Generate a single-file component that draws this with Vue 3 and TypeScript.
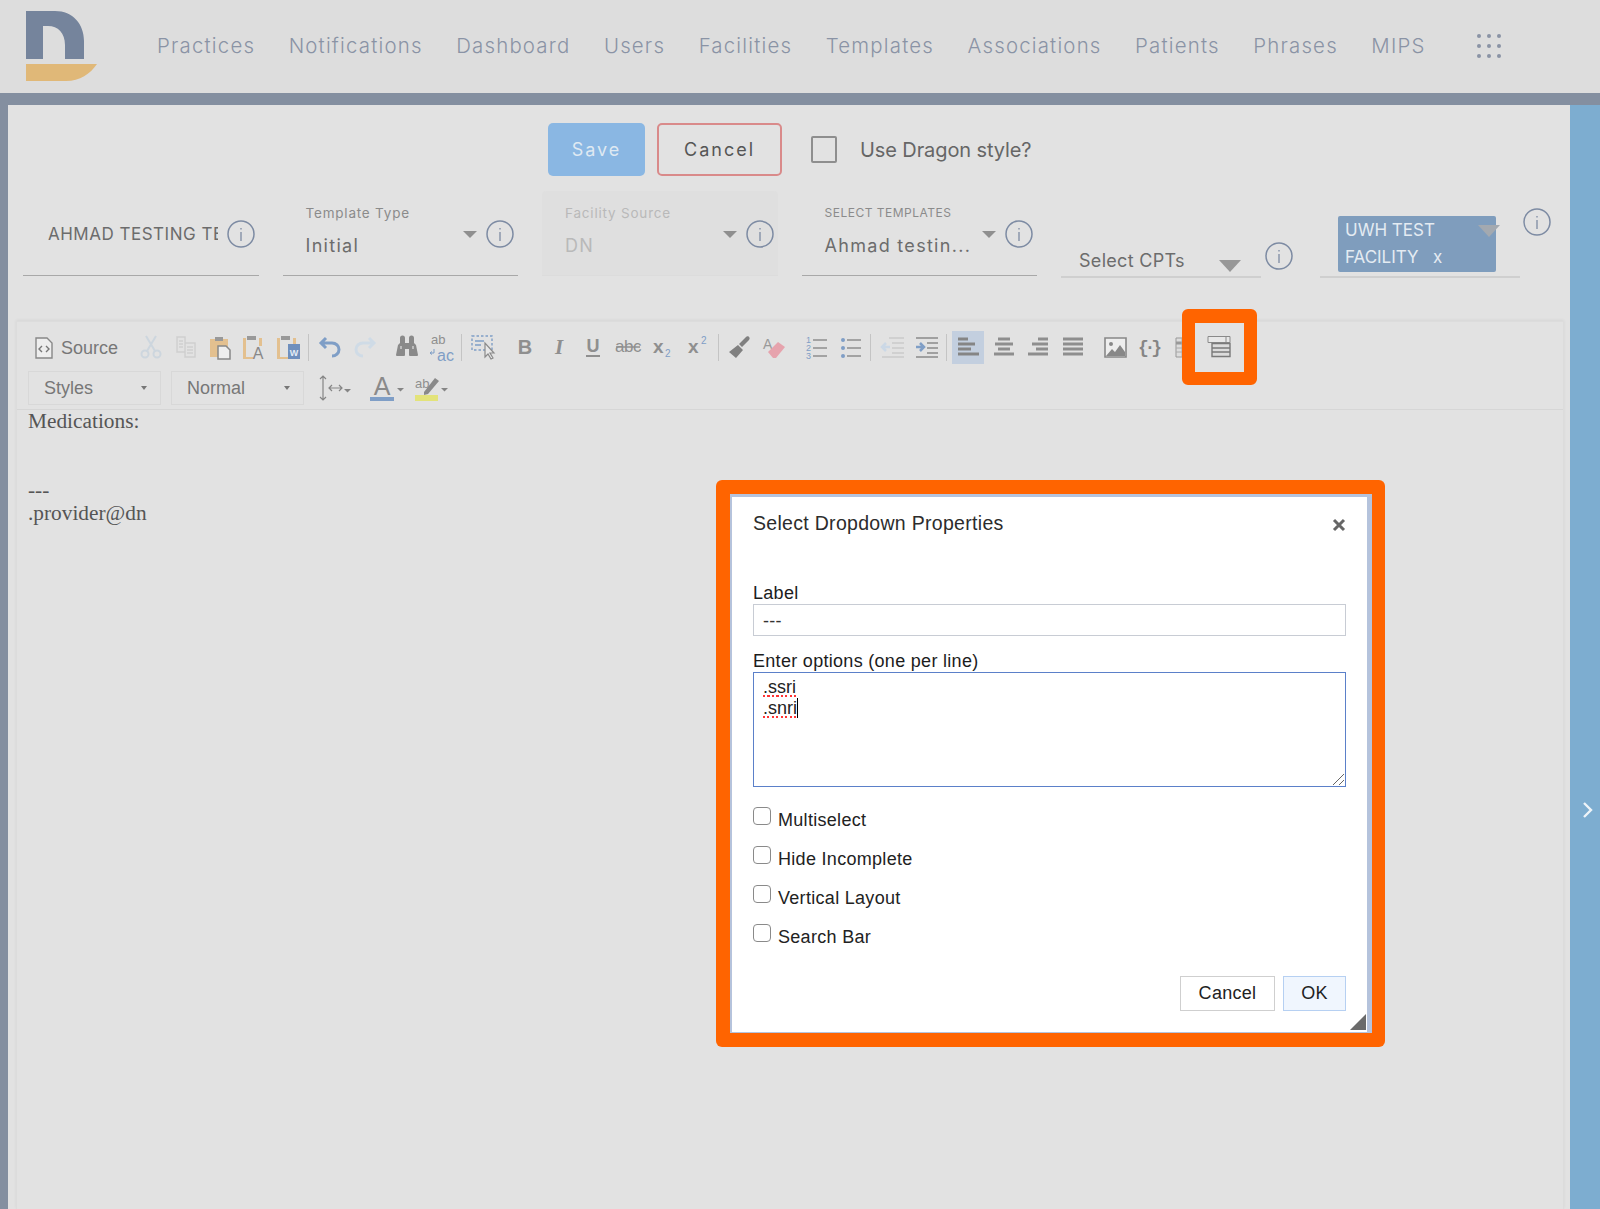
<script setup lang="ts">
const nav = ['Practices','Notifications','Dashboard','Users','Facilities','Templates','Associations','Patients','Phrases','MIPS']

const B = '#7f9ec6', O = '#e3c08f', L = '#cdd6de'
const tools: { svg?: string; sep?: boolean; cls?: string }[] = [
  { svg: `<g fill="none" stroke="${L}" stroke-width="2"><circle cx="6" cy="19" r="3.5"/><circle cx="18" cy="19" r="3.5"/><path d="M8 16 17 1M16 16 7 1"/></g>` },
  { svg: `<g fill="none" stroke="#cfcfcf" stroke-width="1.4"><path d="M3 2h8v15H3zM11 8h10v14H11z"/><path d="M5 6h4M5 9h4M5 12h4M13 12h6M13 15h6M13 18h6"/></g>` },
  { svg: `<path d="M2 4h18v18H2z" fill="${O}"/><path d="M7 2h8v4H7z" fill="#999"/><path d="M10 11h8l4 4v9H10z" fill="#eee" stroke="#888" stroke-width="1.5"/>` },
  { svg: `<path d="M1 3h3v19h8v2H1zM17 3h3v8h-3z" fill="${O}"/><path d="M5 1h9v4H5z" fill="#999"/><text x="16" y="24" font-family="Liberation Sans" font-size="16" fill="#888" text-anchor="middle">A</text>` },
  { svg: `<path d="M0 3h3v19h8v2H0zM16 3h3v6h-3z" fill="${O}"/><path d="M4 1h9v4H4z" fill="#999"/><path d="M11 9h12v15H11z" fill="#6f8fbd"/><text x="17" y="21" font-family="Liberation Sans" font-weight="700" font-size="9" fill="#e5edf5" text-anchor="middle">W</text>` },
  { sep: true },
  { svg: `<path d="M8 3 3 8l5 5M4 8h10c4 0 7 3 7 6.500s-3 6.500-7 6.500" fill="none" stroke="${B}" stroke-width="3"/>` },
  { svg: `<path d="M16 3l5 5-5 5M20 8H10c-4 0-7 3-7 6.500s3 6.500 7 6.500" fill="none" stroke="#cfdbe6" stroke-width="3"/>` },
  { cls: 'g8', svg: `<path d="M5 3a1.500 1.500 0 0 1 5 0v5h4V3a1.500 1.500 0 0 1 5 0v5l2 2 2 10a1 1 0 0 1-1 1h-7a1 1 0 0 1-1-1v-6h-4v6a1 1 0 0 1-1 1H2a1 1 0 0 1-1-1l2-10 2-2z" fill="#8a8a8a"/><path d="M5 11h2v3H5zM17 11h2v3h-2z" fill="#bdbdbd"/>` },
  { svg: `<text x="2" y="8.500" font-family="Liberation Sans" font-size="13" fill="#8f8f8f">ab</text><text x="8" y="25.500" font-family="Liberation Sans" font-size="16" fill="${B}">ac</text><path d="M5 14v4H1l2-1.500M1 18l2 1.500" fill="none" stroke="${B}" stroke-width="1"/>` },
  { sep: true },
  { svg: `<path d="M1 1h20v14H1z" fill="none" stroke="${B}" stroke-width="1.400" stroke-dasharray="2.500 2"/><path d="M4 6h9M4 10h6" stroke="${B}" stroke-width="1.400"/><path d="M14 8v14l3-3 3 5 2-1-3-5h4z" fill="#e8e8e8" stroke="#8a8a8a" stroke-width="1.200"/>` },
  { cls: 'g7', svg: `<text x="12" y="19" font-family="Liberation Sans" font-weight="700" font-size="20" fill="#8f8f8f" text-anchor="middle">B</text>` },
  { svg: `<text x="12" y="19" font-family="Liberation Serif" font-style="italic" font-weight="700" font-size="21" fill="#8f8f8f" text-anchor="middle">I</text>` },
  { svg: `<text x="12" y="17" font-family="Liberation Sans" font-weight="700" font-size="18" fill="#8f8f8f" text-anchor="middle">U</text><path d="M5 21h14" stroke="#8f8f8f" stroke-width="2"/>` },
  { svg: `<text x="12" y="17" font-family="Liberation Sans" font-size="17" fill="#8f8f8f" text-anchor="middle" letter-spacing="-0.500">abc</text><path d="M0 12h24" stroke="#8f8f8f" stroke-width="1.500"/>` },
  { cls: 'g2', svg: `<text x="1" y="18" font-family="Liberation Sans" font-weight="700" font-size="19" fill="#8f8f8f">x</text><text x="13" y="22" font-family="Liberation Sans" font-size="10" fill="${B}">2</text>` },
  { svg: `<text x="1" y="18" font-family="Liberation Sans" font-weight="700" font-size="19" fill="#8f8f8f">x</text><text x="14" y="9" font-family="Liberation Sans" font-size="10" fill="${B}">2</text>` },
  { sep: true },
  { svg: `<path d="M10 10l5 5-7 8-7-6zM11 9l7-7c2-2 5 1 3 3l-7 7z" fill="#808080"/>` },
  { svg: `<text x="1" y="14" font-family="Liberation Sans" font-size="14" fill="#9a9a9a">A</text><path d="M6 17 16 7l7 5-9 11h-3z" fill="#e6a3ad"/>` },
  { cls: 'g8', svg: `<g fill="${B}" font-family="Liberation Sans" font-size="9"><text x="1" y="8">1</text><text x="1" y="16">2</text><text x="1" y="24">3</text></g><path d="M8 5h14M8 13h14M8 21h14" stroke="#8f8f8f" stroke-width="1.500"/>` },
  { svg: `<g fill="${B}"><circle cx="4" cy="5" r="2"/><circle cx="4" cy="13" r="2"/><circle cx="4" cy="21" r="2"/></g><path d="M8 5h14M8 13h14M8 21h14" stroke="#8f8f8f" stroke-width="1.500"/>` },
  { sep: true },
  { svg: `<path d="M8 3h15M11 8h12M11 13h12M11 18h12M1 22h22" stroke="#d0d0d0" stroke-width="2"/><path d="M9 12H1m4-4-4 4 4 4" fill="none" stroke="#cbd8e6" stroke-width="2.500"/>` },
  { svg: `<path d="M1 3h22M12 8h11M12 13h11M12 18h11M1 22h22" stroke="#a0a0a0" stroke-width="2"/><path d="M1 12h8m-4-4 4 4-4 4" fill="none" stroke="${B}" stroke-width="2.500"/>` },
  { sep: true },
  { cls: 'on g1', svg: `<path d="M2 4h10M2 9h17M2 14h13M2 19h21" stroke="#858585" stroke-width="3"/>` },
  { svg: `<path d="M6 4h12M3 9h18M6 14h12M2 19h20" stroke="#8e8e8e" stroke-width="3"/>` },
  { svg: `<path d="M12 4h10M6 9h16M10 14h12M2 19h20" stroke="#8e8e8e" stroke-width="3"/>` },
  { svg: `<path d="M2 4h20M2 9h20M2 14h20M2 19h20" stroke="#8e8e8e" stroke-width="3"/>` },
  { cls: 'g8', svg: `<path d="M2 3h21v19H2z" fill="#eee" stroke="#888" stroke-width="1.600"/><circle cx="8" cy="9" r="2" fill="#888"/><path d="M3 21l6-7 3 3 5-7 5 7v4z" fill="#888"/>` },
  { cls: 'g1', svg: `<text x="12" y="18" font-family="Liberation Mono" font-weight="700" font-size="18" fill="#858585" text-anchor="middle" textLength="24" lengthAdjust="spacing">{·}</text>` },
  { svg: `<path d="M3 3h18v19H3z" fill="#ddd" stroke="#999"/><path d="M3 8h18" stroke="#999" stroke-width="3"/><path d="M9 3v19M15 3v19M3 13h18M3 17h18" stroke="#aaa"/>` },
  { svg: `<path d="M1 1.500h22v6H1z" fill="#e8e8e8" stroke="#8a8a8a" stroke-width="1"/><path d="M19 1.500v6" stroke="#8a8a8a"/><path d="M5 8.500h18v13H5z" fill="#dcdcdc" stroke="#7a7a7a" stroke-width="1.400"/><path d="M5 13h18M5 17h18" stroke="#7a7a7a" stroke-width="1.600"/>` },
]
const checks = ['Multiselect','Hide Incomplete','Vertical Layout','Search Bar']
</script>

<template>
  <div class="page">
    <header class="top">
      <svg class="logo" width="72" height="72" viewBox="26 10 72 72">
        <path d="M26 11H55C73 11 84 24 84 41V59H65V45C65 33 58 26 48 26H43V59H26Z" fill="#75849c"/>
        <path d="M26 64H97C90 74 80 81 66 81H26Z" fill="#e0b878"/>
      </svg>
      <nav class="nav"><a v-for="n in nav" :key="n">{{ n }}</a></nav>
      <svg class="grid" width="24" height="24" viewBox="0 0 24 24" fill="#8a93a5">
        <template v-for="y in [2,12,22]" :key="y"><circle v-for="x in [2,12,22]" :key="x" :cx="x" :cy="y" r="2"/></template>
      </svg>
    </header>

    <div class="main">
      <div class="content">
        <div class="actions">
          <button class="save">Save</button>
          <button class="cancel">Cancel</button>
          <span class="dragon-box"></span>
          <span class="dragon">Use Dragon style?</span>
        </div>

        <div class="fields">
          <div class="field f-name">
            <span class="name">AHMAD TESTING TEMPLATE</span>
            <svg class="info" width="28" height="28" viewBox="0 0 28 28"><circle cx="14" cy="14" r="13" fill="none" stroke="#7d8ba3" stroke-width="1.500"/><path d="M14 8v1.500M14 12v9" stroke="#7d8ba3" stroke-width="1.300"/></svg>
          </div>
          <div class="field">
            <div class="ftext"><label>Template Type</label><div class="val">Initial</div></div>
            <i class="arrow"></i>
            <svg class="info" width="28" height="28" viewBox="0 0 28 28"><circle cx="14" cy="14" r="13" fill="none" stroke="#7d8ba3" stroke-width="1.500"/><path d="M14 8v1.500M14 12v9" stroke="#7d8ba3" stroke-width="1.300"/></svg>
          </div>
          <div class="field disabled">
            <div class="ftext"><label>Facility Source</label><div class="val">DN</div></div>
            <i class="arrow"></i>
            <svg class="info" width="28" height="28" viewBox="0 0 28 28"><circle cx="14" cy="14" r="13" fill="none" stroke="#7d8ba3" stroke-width="1.500"/><path d="M14 8v1.500M14 12v9" stroke="#7d8ba3" stroke-width="1.300"/></svg>
          </div>
          <div class="field">
            <div class="ftext"><label class="up">SELECT TEMPLATES</label><div class="val">Ahmad testin...</div></div>
            <i class="arrow"></i>
            <svg class="info" width="28" height="28" viewBox="0 0 28 28"><circle cx="14" cy="14" r="13" fill="none" stroke="#7d8ba3" stroke-width="1.500"/><path d="M14 8v1.500M14 12v9" stroke="#7d8ba3" stroke-width="1.300"/></svg>
          </div>
          <div class="cpts">
            <div class="cpts-box"><span>Select CPTs</span><i class="arrow big"></i></div>
            <svg class="info" width="28" height="28" viewBox="0 0 28 28"><circle cx="14" cy="14" r="13" fill="none" stroke="#7d8ba3" stroke-width="1.500"/><path d="M14 8v1.500M14 12v9" stroke="#7d8ba3" stroke-width="1.300"/></svg>
          </div>
          <div class="fac">
            <div class="fac-box">
              <div class="chip">UWH TEST<br>FACILITY&nbsp;&nbsp;&nbsp;x</div>
              <i class="arrow big over"></i>
            </div>
            <svg class="info" width="28" height="28" viewBox="0 0 28 28"><circle cx="14" cy="14" r="13" fill="none" stroke="#7d8ba3" stroke-width="1.500"/><path d="M14 8v1.500M14 12v9" stroke="#7d8ba3" stroke-width="1.300"/></svg>
          </div>
        </div>

        <section class="editor">
          <div class="tb1">
            <div class="source">
              <svg width="18" height="22" viewBox="0 0 18 22"><path d="M1 1h11l5 5v15H1z" fill="#eee" stroke="#888" stroke-width="1.400"/><path d="M7 9l-3 3 3 3M11 9l3 3-3 3" fill="none" stroke="#777" stroke-width="1.400"/></svg>
              <span>Source</span>
            </div>
            <template v-for="(t, i) in tools" :key="i">
              <span v-if="t.sep" class="sep"></span>
              <span v-else class="btn" :class="t.cls"><svg width="24" height="24" viewBox="0 0 24 24" v-html="t.svg"></svg></span>
            </template>
          </div>
          <div class="tb2">
            <div class="combo"><span>Styles</span><i></i></div>
            <div class="combo"><span>Normal</span><i></i></div>
            <span class="t2 lh">
              <svg width="34" height="30" viewBox="0 0 34 30" fill="none" stroke="#858585" stroke-width="1.200"><path d="M5 3v24M2 6l3-3 3 3M2 24l3 3 3-3M11 15h13M14 12l-3 3 3 3M21 12l3 3-3 3"/><path d="M26 16h7l-3.500 3.500z" fill="#858585" stroke="none"/></svg>
            </span>
            <span class="t2 col">
              <svg width="34" height="30" viewBox="0 0 34 30"><text x="12" y="22" font-family="Liberation Sans" font-size="25" fill="#8a8a8a" text-anchor="middle">A</text><path d="M0 24h24v4H0z" fill="#7f9ec6"/><path d="M27 15h7l-3.500 3.500z" fill="#858585"/></svg>
            </span>
            <span class="t2 hl">
              <svg width="34" height="30" viewBox="0 0 34 30"><text x="0" y="15" font-family="Liberation Sans" font-size="13" fill="#8f8f8f">ab</text><path d="M9 19 20 5l4 3-11 13-4 1z" fill="#8a8a8a"/><path d="M0 22h23v6H0z" fill="#e3e37a"/><path d="M26 15h7l-3.500 3.500z" fill="#858585"/></svg>
            </span>
          </div>
          <div class="doc">
            <p>Medications:</p>
            <p>&nbsp;</p>
            <p>&nbsp;</p>
            <p>---</p>
            <p>.provider@dn</p>
          </div>
        </section>
      </div>
      <aside class="side">
        <svg width="14" height="20" viewBox="0 0 14 20"><path d="M3 3l7 7-7 7" fill="none" stroke="#eef4f8" stroke-width="2.400"/></svg>
      </aside>
    </div>

    <div class="mark"></div>

    <div class="dialog-frame">
      <div class="dialog">
        <h2>Select Dropdown Properties</h2>
        <svg class="close" width="14" height="14" viewBox="0 0 14 14"><path d="M2 2l10 10M12 2 2 12" stroke="#666" stroke-width="3"/></svg>
        <div class="lab l1">Label</div>
        <div class="input">---</div>
        <div class="lab l2">Enter options (one per line)</div>
        <div class="area">
          <div><u>.ssri</u></div>
          <div><u>.snri</u><b class="caret"></b></div>
          <svg class="grip" width="14" height="14" viewBox="0 0 14 14"><path d="M2 13 13 2M8 13l5-5" stroke="#666"/></svg>
        </div>
        <div class="checks">
          <div v-for="c in checks" :key="c" class="check"><span class="cb"></span><span>{{ c }}</span></div>
        </div>
        <div class="btns">
          <span class="b-cancel">Cancel</span>
          <span class="b-ok">OK</span>
        </div>
        <svg class="resize" width="16" height="16" viewBox="0 0 16 16"><path d="M16 0v16H0z" fill="#6b6b6b"/></svg>
      </div>
    </div>
  </div>
</template>

<style scoped>
.page { position: relative; width: 1600px; height: 1209px; overflow: hidden; display: flex; flex-direction: column; background: #e2e2e2; font-family: "Liberation Sans", Arial, sans-serif; }
.top { height: 93px; flex: none; background: #dddddd; display: flex; align-items: center; }
.logo { margin-left: 26px; margin-top: -1px; flex: none; }
.nav { display: flex; gap: 33.500px; margin-left: 59px; margin-top: -2px; font-family: Inter, sans-serif; font-size: 20.400px; font-weight: 300; color: #8a93a5; letter-spacing: 1.200px; white-space: nowrap; }
.grid { margin-left: 51px; margin-top: -2px; }
.main { flex: 1; min-height: 0; display: flex; border-top: 12px solid #848fa0; border-left: 8px solid #848fa0; }
.content { flex: 1; min-width: 0; display: flex; flex-direction: column; background: #e2e2e2; }
.side { width: 30px; flex: none; background: #7dadd0; display: flex; align-items: flex-start; justify-content: center; padding-top: 695px; box-sizing: border-box; }
.side svg { margin-left: 6px; }

.actions { display: flex; align-items: center; height: 53px; margin-top: 18px; padding-left: 540px; font-family: Inter, sans-serif; }
.save { width: 97px; height: 53px; border: 0; border-radius: 5px; background: #8ab7e3; color: #dfe9f2; font: 18px Inter, sans-serif; letter-spacing: 2px; }
.cancel { width: 125px; height: 53px; margin-left: 12px; border: 2px solid #d98a8a; border-radius: 5px; background: #e2e2e2; color: #555; font: 18px Inter, sans-serif; letter-spacing: 2px; }
.dragon-box { width: 26px; height: 27px; margin-left: 29px; border: 2px solid #8e8e8e; border-radius: 2px; box-sizing: border-box; }
.dragon { margin-left: 23px; font-size: 20px; letter-spacing: -0.100px; color: #666; white-space: nowrap; }

.fields { display: flex; margin-top: 15px; padding-left: 15px; align-items: flex-start; }
.field { width: 235.500px; height: 85px; box-sizing: border-box; margin-right: 24px; border-bottom: 1px solid #a8a8a8; display: flex; padding: 0 4px 0 23px; flex: none; }
.ftext { flex: 1; min-width: 0; padding-top: 14px; }
label { display: block; font-family: Inter, sans-serif; font-size: 13.500px; line-height: 16px; color: #8b8b8b; letter-spacing: 0.800px; white-space: nowrap; }
label.up { font-size: 12px; letter-spacing: 0.500px; }
.val { margin-top: 13px; font-family: Inter, sans-serif; font-size: 18px; line-height: 24px; color: #6c6c6c; letter-spacing: 1.300px; white-space: nowrap; }
.arrow { flex: none; align-self: flex-start; margin-top: 40px; margin-right: 9px; width: 0; height: 0; border-left: 7.500px solid transparent; border-right: 7.500px solid transparent; border-top: 7.500px solid #8f8f8f; }
.info { flex: none; align-self: flex-start; margin-top: 29px; }
.disabled { background: #dfdfdf; border-bottom-color: #dcdcdc; border-radius: 4px 4px 0 0; }
.disabled label, .disabled .val { color: #b9b9b9; }
.f-name { padding-left: 25px; }
.name { width: 170px; flex: none; margin: 31px 9px 0 0; height: 24px; overflow: hidden; font-family: Inter, sans-serif; font-size: 17px; line-height: 24px; color: #6c6c6c; letter-spacing: 0.500px; white-space: nowrap; }

.cpts { display: flex; width: 259px; flex: none; }
.cpts-box { position: relative; width: 200px; height: 87px; box-sizing: border-box; border-bottom: 2px solid #cfcfcf; padding: 58px 0 0 18px; font-family: Inter, sans-serif; font-size: 18px; line-height: 24px; letter-spacing: 0.300px; color: #6c6c6c; display: flex; justify-content: space-between; margin-right: 4px; }
.arrow.big { border-left-width: 11px; border-right-width: 11px; border-top-width: 12px; border-top-color: #979797; margin: 11px 20px 0 0; }
.cpts .info { margin-top: 51px; }
.fac { display: flex; flex: none; }
.fac-box { position: relative; width: 200px; height: 87px; box-sizing: border-box; border-bottom: 2px solid #cfcfcf; padding: 25px 0 0 18px; margin-right: 3px; }
.chip { width: 158px; height: 56px; box-sizing: border-box; padding: 1px 0 0 7px; background: #7f9dbd; border-radius: 2px; color: #e4ebf2; font-family: Inter, sans-serif; font-size: 17px; line-height: 27px; white-space: nowrap; }
.arrow.big.over { position: absolute; left: 158px; top: 34px; margin: 0; border-top-color: #a3a9b0; }
.fac .info { margin-top: 17px; }

.editor { flex: 1; min-height: 0; margin: 43px 6px 0 8px; border: 1px solid #dcdcdc; border-bottom: 0; box-shadow: 0 -1px 3px rgba(0,0,0,.06); background: #e2e2e2; }
.tb1 { display: flex; align-items: center; height: 33px; margin-top: 9px; padding-left: 18px; }
.source { display: flex; align-items: center; width: 99px; font-size: 18px; color: #777; gap: 8px; flex: none; padding-top: 1px; box-sizing: border-box; }
.btn { width: 34.400px; height: 33px; flex: none; display: flex; align-items: center; justify-content: center; }
.btn svg { margin-top: -1px; overflow: visible; }
.btn.on { background: #c3cfdf; width: 32px; margin-right: 2.400px; }
.g8 { margin-left: 8px; }
.g7 { margin-left: 7.600px; }
.g2 { margin-left: 2px; }
.g1 { margin-left: 1px; }
.sep { width: 1px; height: 27px; background: #c4c4c4; margin: 0 4px 0 2px; flex: none; }
.tb2 { display: flex; align-items: center; height: 34px; margin-top: 7px; padding-left: 11px; padding-bottom: 4px; box-sizing: content-box; border-bottom: 1px solid #d6d6d6; }
.combo { width: 133px; height: 34px; box-sizing: border-box; margin-right: 10px; border: 1px solid #d8d8d8; display: flex; align-items: center; justify-content: space-between; padding: 0 13px 0 15px; font-size: 18px; color: #777; }
.combo i { width: 0; height: 0; border-left: 3.500px solid transparent; border-right: 3.500px solid transparent; border-top: 4px solid #777; }
.t2 { display: flex; width: 34px; }
.lh { margin-left: 4px; }
.col { margin-left: 18px; }
.hl { margin-left: 11px; }
.doc { padding-left: 11px; font-family: "Liberation Serif", "Times New Roman", serif; font-size: 21.330px; line-height: 23px; color: #555; }
.doc p { margin: 0; }

.mark { position: absolute; left: 1182px; top: 309px; width: 75px; height: 76px; box-sizing: border-box; border: 13px solid #ff6400; border-top-width: 14px; border-radius: 6px; }
.dialog-frame { position: absolute; left: 716px; top: 480px; width: 669px; height: 567px; box-sizing: border-box; padding: 14px 13px 14px 14px; background: #ff6400; border-radius: 6px; }
.dialog { position: relative; height: 100%; box-sizing: border-box; background: #fff; border: solid #b5c3dc; border-width: 3px 5px 1px 2px; padding: 14px 21px 0 21px; color: #222; font-size: 18px; line-height: 20px; letter-spacing: 0.300px; }
h2 { margin: 0; font-size: 19.500px; font-weight: 400; line-height: 24px; color: #2c2c2c; }
.close { position: absolute; right: 21px; top: 21px; }
.lab { color: #1c1c1c; }
.l1 { margin-top: 48px; }
.l2 { margin-top: 15px; }
.input { margin-top: 1px; height: 32px; box-sizing: border-box; border: 1px solid #c8ccd4; padding: 0 9px; line-height: 32px; color: #333; }
.area { position: relative; margin-top: 1px; height: 115px; box-sizing: border-box; border: 1px solid #5b80c9; padding: 4px 9px; line-height: 21px; color: #222; letter-spacing: 0; }
.area u { text-decoration: none; background: repeating-linear-gradient(90deg, #f33 0 2px, transparent 2px 4.500px) left bottom / 100% 2px no-repeat; }
.caret { display: inline-block; width: 1px; height: 20px; background: #000; vertical-align: -4px; }
.grip { position: absolute; right: 0; bottom: 0; }
.checks { margin-top: 23px; display: flex; flex-direction: column; gap: 19px; }
.check { display: flex; gap: 7px; height: 20px; }
.cb { width: 18px; height: 18px; box-sizing: border-box; margin-top: -3px; border: 1.500px solid #8a8a8a; border-radius: 4px; background: #fff; }
.btns { display: flex; justify-content: flex-end; gap: 8px; margin-top: 29px; }
.btns span { height: 35px; box-sizing: border-box; line-height: 33px; text-align: center; }
.b-cancel { width: 95px; border: 1px solid #cfcfcf; }
.b-ok { width: 63px; border: 1px solid #b6d0f2; background: #f0f6fe; }
.resize { position: absolute; right: 1px; bottom: 2px; }
</style>
